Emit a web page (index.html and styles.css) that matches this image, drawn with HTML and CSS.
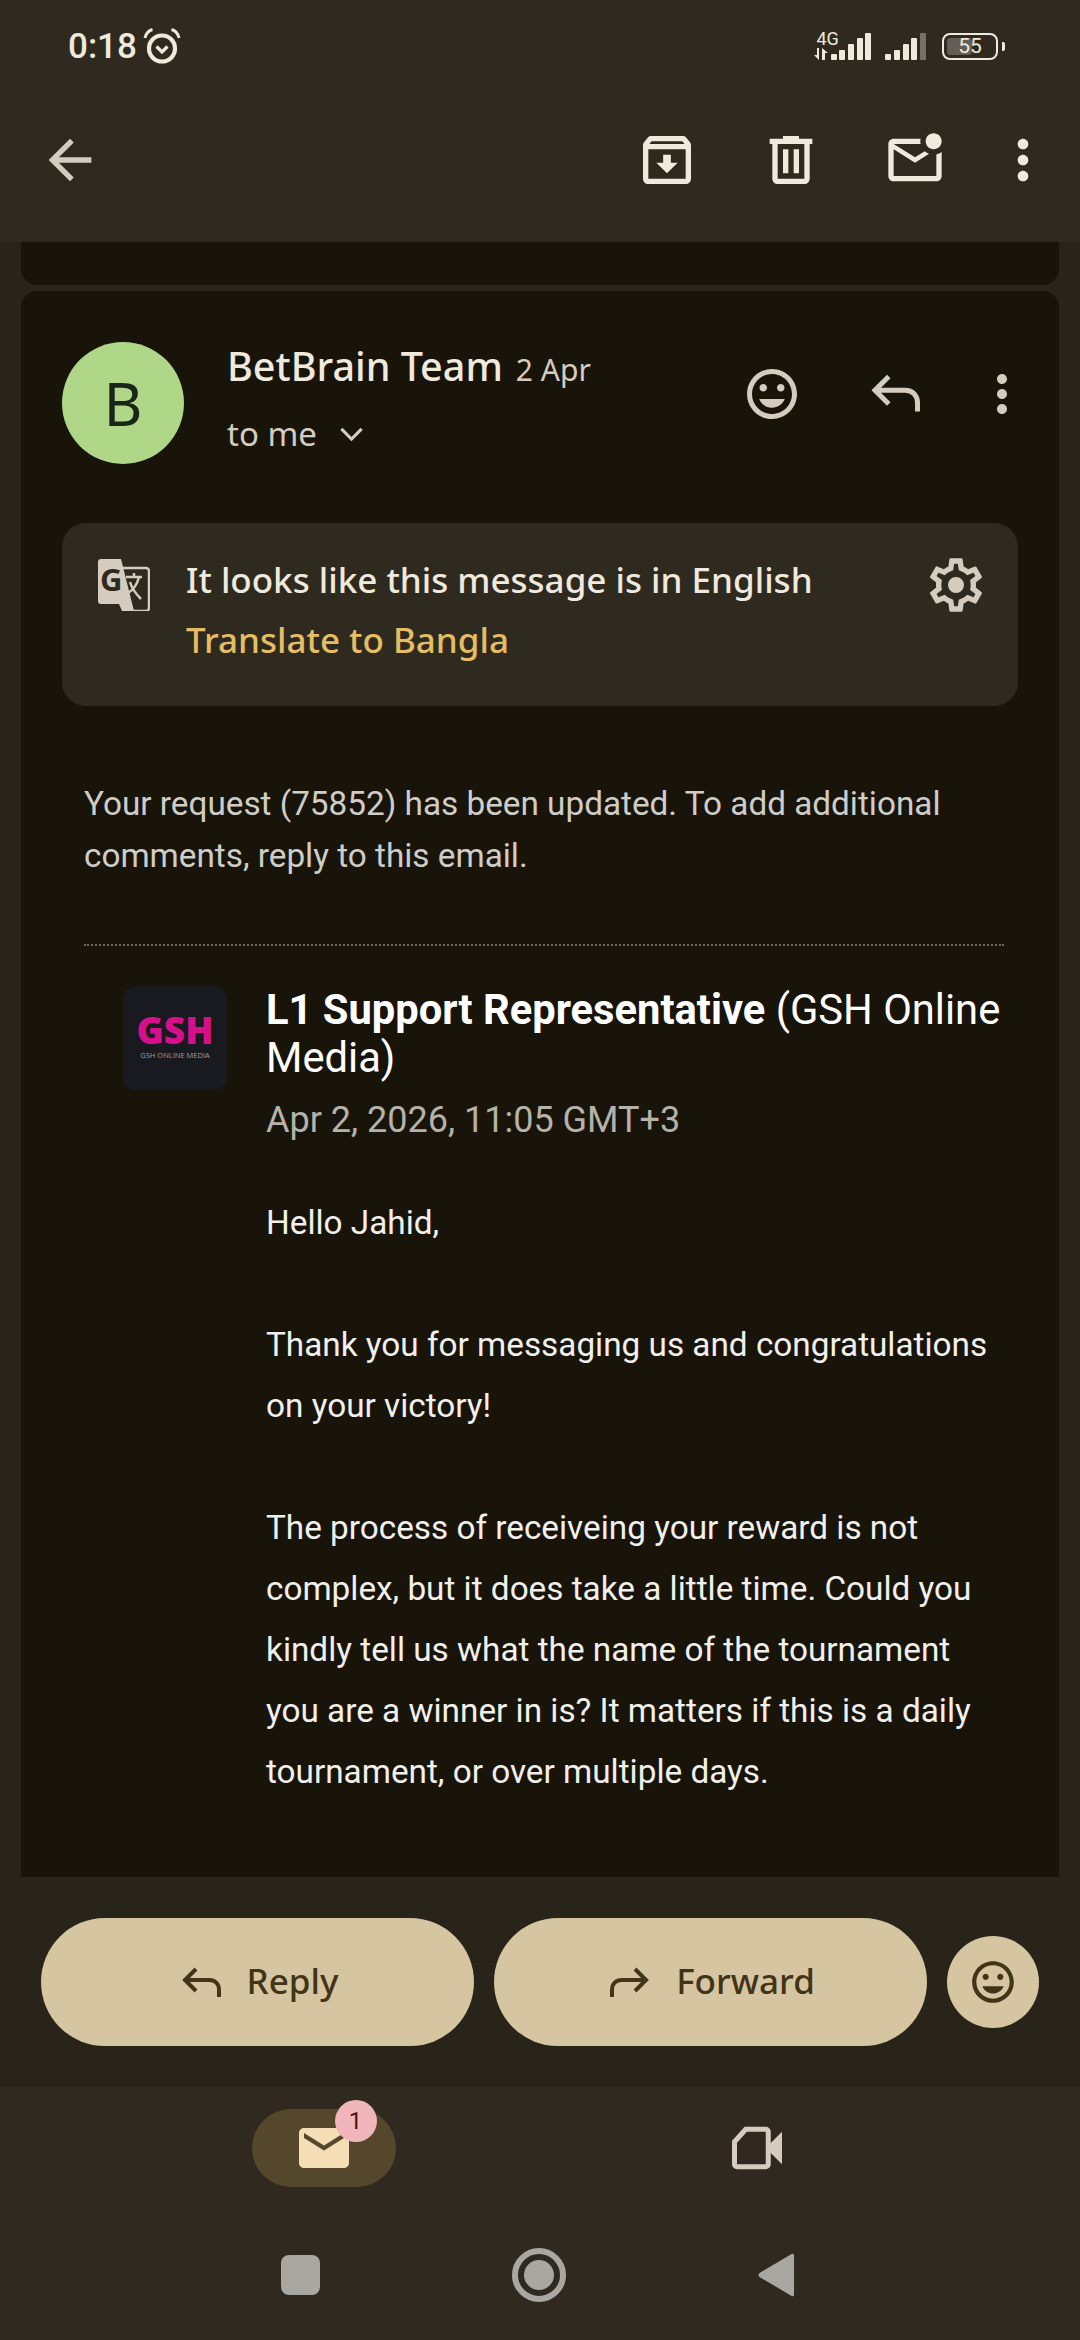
FILE: index.html
```html
<!DOCTYPE html>
<html lang="en">
<head>
<meta charset="utf-8">
<title>BetBrain Team</title>
<link rel="stylesheet" href="styles.css">
</head>
<body>
<div class="screen">
  <header class="top">
    <div class="status">
      <div class="status-left">
        <span class="clock">0:18</span>
        <svg class="alarm" viewBox="0 0 38 36"><circle cx="19" cy="20.500" r="13" fill="none" stroke="currentColor" stroke-width="4.200"/><path d="M13.500 18.500 19 24l5.500-5.500" fill="none" stroke="currentColor" stroke-width="3.200"/><path d="M2 10C3 5.500 5.500 2.500 9.500 1.500M36 10C35 5.500 32.500 2.500 28.500 1.500" fill="none" stroke="currentColor" stroke-width="3"/></svg>
      </div>
      <div class="status-right">
        <div class="net">
          <span class="net-label">4G</span>
          <svg class="net-arrows" viewBox="0 0 15 12"><path d="M5 0v12L0 7h3V0zM8 12V0l6 5h-3v7z" fill="currentColor"/></svg>
        </div>
        <div class="bars"><i class="b1"></i><i class="b2"></i><i class="b3"></i><i class="b4"></i><i class="b5"></i></div>
        <div class="bars bars-two"><i class="b1"></i><i class="b2"></i><i class="b3"></i><i class="b4"></i><i class="b5 dim"></i></div>
        <div class="battery"><div class="battery-body"><span class="battery-fill"></span><span class="battery-num">55</span></div><span class="battery-tip"></span></div>
      </div>
    </div>
    <div class="toolbar">
      <svg class="icon" viewBox="0 0 24 24"><path d="M20 11H7.830l5.590-5.590L12 4l-8 8 8 8 1.410-1.410L7.830 13H20z" fill="currentColor" opacity=".85"/></svg>
      <div class="toolbar-actions">
        <svg class="icon" viewBox="0 0 24 24"><path d="M20.540 5.230l-1.390-1.680C18.880 3.210 18.470 3 18 3H6c-.47 0-.88.21-1.160.55L3.460 5.230C3.170 5.570 3 6.020 3 6.500V19c0 1.100.9 2 2 2h14c1.100 0 2-.9 2-2V6.500c0-.48-.17-.93-.46-1.270zM6.240 5h11.520l.83 1H5.420zM5 19V8h14v11zm8.450-9h-2.900v3H8l4 4 4-4h-2.550z" fill="currentColor"/></svg>
        <svg class="icon" viewBox="0 0 24 24"><path d="M15 4V3H9v1H4v2h1v13c0 1.100.9 2 2 2h10c1.100 0 2-.9 2-2V6h1V4zm2 15H7V6h10zM9 8h2v9H9zm4 0h2v9h-2z" fill="currentColor"/></svg>
        <svg class="icon" viewBox="0 0 24 24"><path d="M22 8.980V18c0 1.100-.9 2-2 2H4c-1.100 0-2-.9-2-2V6c0-1.100.9-2 2-2h10.100c-.06.32-.1.66-.1 1s.04.68.1 1H4l8 5 3.670-2.290c.47.43 1.020.76 1.630.98L12 13 4 8v10h16V9.900c.74-.15 1.420-.48 2-.92zM16 5c0 1.660 1.340 3 3 3s3-1.340 3-3-1.340-3-3-3-3 1.340-3 3z" fill="currentColor"/></svg>
        <svg class="icon" viewBox="0 0 24 24"><path d="M12 8c1.100 0 2-.9 2-2s-.9-2-2-2-2 .9-2 2 .9 2 2 2zm0 2c-1.100 0-2 .9-2 2s.9 2 2 2 2-.9 2-2-.9-2-2-2zm0 6c-1.100 0-2 .9-2 2s.9 2 2 2 2-.9 2-2-.9-2-2-2z" fill="currentColor"/></svg>
      </div>
    </div>
  </header>

  <main class="thread">
    <div class="card-stub"></div>
    <article class="card">
      <div class="sender">
        <div class="avatar">B</div>
        <div class="sender-info">
          <div class="sender-line"><span class="sender-name">BetBrain Team</span><span class="sender-date">2 Apr</span></div>
          <div class="to-line"><span>to me</span>
            <svg class="chev" viewBox="0 0 24 24"><path d="M3 7l9 9 9-9" fill="none" stroke="currentColor" stroke-width="2.800"/></svg>
          </div>
        </div>
        <div class="sender-actions">
          <svg class="icon" viewBox="0 0 24 24"><path d="M11.990 2C6.470 2 2 6.480 2 12s4.470 10 9.990 10C17.520 22 22 17.520 22 12S17.520 2 11.990 2zM12 20c-4.420 0-8-3.580-8-8s3.580-8 8-8 8 3.580 8 8-3.580 8-8 8zm3.500-9c.83 0 1.500-.67 1.500-1.500S16.330 8 15.500 8 14 8.670 14 9.500s.67 1.500 1.500 1.500zm-7 0c.83 0 1.500-.67 1.500-1.500S9.330 8 8.500 8 7 8.670 7 9.500 7.670 11 8.500 11zm3.500 6.500c2.330 0 4.310-1.460 5.110-3.500H6.890c.8 2.040 2.780 3.500 5.110 3.500z" fill="currentColor"/></svg>
          <svg class="icon" viewBox="0 0 24 24"><path d="M21 19v-3.500c0-3-2-5-5-5H4M9.500 5 4 10.500 9.500 16" fill="none" stroke="currentColor" stroke-width="2"/></svg>
          <svg class="icon" viewBox="0 0 24 24"><path d="M12 8c1.100 0 2-.9 2-2s-.9-2-2-2-2 .9-2 2 .9 2 2 2zm0 2c-1.100 0-2 .9-2 2s.9 2 2 2 2-.9 2-2-.9-2-2-2zm0 6c-1.100 0-2 .9-2 2s.9 2 2 2 2-.9 2-2-.9-2-2-2z" fill="currentColor"/></svg>
        </div>
      </div>

      <div class="translate">
        <svg class="translate-icon" viewBox="0 0 52 52">
          <path d="M24 9h24a3 3 0 0 1 3 3v37a3 3 0 0 1-3 3H28" fill="none" stroke="#d4cdbf" stroke-width="2.500"/>
          <path d="M3 0h20l13 52H24l-3-7H3a3 3 0 0 1-3-3V3a3 3 0 0 1 3-3z" fill="#d4cdbf"/>
          <text class="translate-g" x="2" y="32">G</text>
          <path d="M28 18h16M36 14v4M41 18c-2 8-6 13-11 16M32 23c2 7 6 12 11 17" fill="none" stroke="#d4cdbf" stroke-width="2.500"/>
        </svg>
        <div class="translate-text">
          <div class="translate-msg">It looks like this message is in English</div>
          <div class="translate-link">Translate to Bangla</div>
        </div>
        <svg class="gear" viewBox="0 0 24 24"><path d="M19.430 12.980c.04-.32.07-.64.07-.98s-.03-.66-.07-.98l2.110-1.650c.19-.15.24-.42.12-.64l-2-3.460c-.12-.22-.39-.3-.61-.22l-2.490 1c-.52-.4-1.080-.73-1.690-.98l-.38-2.650C14.460 2.180 14.250 2 14 2h-4c-.25 0-.46.18-.49.42l-.38 2.650c-.61.25-1.170.59-1.690.98l-2.490-1c-.23-.09-.49 0-.61.22l-2 3.460c-.13.22-.07.49.12.64l2.110 1.650c-.04.32-.07.65-.07.98s.03.66.07.98l-2.110 1.650c-.19.15-.24.42-.12.64l2 3.460c.12.22.39.3.61.22l2.490-1c.52.4 1.080.73 1.690.98l.38 2.650c.03.24.24.42.49.42h4c.25 0 .46-.18.49-.42l.38-2.650c.61-.25 1.170-.59 1.690-.98l2.490 1c.23.09.49 0 .61-.22l2-3.460c.12-.22.07-.49-.12-.64zM17.450 11.270c.04.31.05.52.05.73s-.02.43-.05.73l-.14 1.130.89.7 1.080.84-.7 1.210-1.270-.51-1.040-.42-.9.68c-.43.32-.84.56-1.250.73l-1.060.43-.16 1.130-.2 1.350h-1.400l-.19-1.350-.16-1.130-1.060-.43c-.43-.18-.83-.41-1.230-.71l-.91-.7-1.060.43-1.270.51-.7-1.210 1.080-.84.89-.7-.14-1.130c-.03-.31-.05-.54-.05-.74s.02-.43.05-.73l.14-1.130-.89-.7-1.080-.84.7-1.210 1.270.51 1.040.42.9-.68c.43-.32.84-.56 1.250-.73l1.060-.43.16-1.130.2-1.350h1.390l.19 1.350.16 1.130 1.060.43c.43.18.83.41 1.230.71l.91.7 1.060-.43 1.270-.51.7 1.210-1.070.85-.89.7zM12 9a3 3 0 1 0 0 6 3 3 0 0 0 0-6z" fill="#d4cdbf"/></svg>
      </div>

      <p class="intro">Your request (75852) has been updated. To add additional comments, reply to this email.</p>

      <div class="reply-block">
        <div class="logo"><span class="logo-mark">GSH</span><span class="logo-sub">GSH ONLINE MEDIA</span></div>
        <div class="reply-content">
          <h2 class="author"><strong>L1 Support Representative</strong> (GSH Online Media)</h2>
          <div class="stamp">Apr 2, 2026, 11:05 GMT+3</div>
          <div class="body-text">
            <p>Hello Jahid,</p>
            <p>Thank you for messaging us and congratulations on your victory!</p>
            <p>The process of receiveing your reward is not complex, but it does take a little time. Could you kindly tell us what the name of the tournament you are a winner in is? It matters if this is a daily tournament, or over multiple days.</p>
          </div>
        </div>
      </div>
    </article>
  </main>

  <div class="actions">
    <button class="pill">
      <svg class="pill-icon" viewBox="0 0 24 24"><path d="M21 19.500V16c0-3-2-5-5-5H4M9.500 5.500 4 11l5.500 5.500" fill="none" stroke="currentColor" stroke-width="2"/></svg>
      <span class="pill-label">Reply</span>
    </button>
    <button class="pill">
      <svg class="pill-icon" viewBox="0 0 24 24"><path d="M3 19.500V16c0-3 2-5 5-5h12M14.500 5.500 20 11l-5.500 5.500" fill="none" stroke="currentColor" stroke-width="2"/></svg>
      <span class="pill-label">Forward</span>
    </button>
    <button class="round">
      <svg class="round-icon" viewBox="0 0 24 24"><path d="M11.990 2C6.470 2 2 6.480 2 12s4.470 10 9.990 10C17.520 22 22 17.520 22 12S17.520 2 11.990 2zM12 20c-4.420 0-8-3.580-8-8s3.580-8 8-8 8 3.580 8 8-3.580 8-8 8zm3.500-9c.83 0 1.500-.67 1.500-1.500S16.330 8 15.500 8 14 8.670 14 9.500s.67 1.500 1.500 1.500zm-7 0c.83 0 1.500-.67 1.500-1.500S9.330 8 8.500 8 7 8.670 7 9.500 7.670 11 8.500 11zm3.500 6.500c2.330 0 4.310-1.460 5.110-3.500H6.890c.8 2.040 2.780 3.500 5.110 3.500z" fill="currentColor"/></svg>
    </button>
  </div>

  <footer class="bottom">
    <nav class="tabs">
      <div class="tab tab-active">
        <svg class="tab-icon" viewBox="0 0 24 24"><path d="M20 4H4c-1.100 0-1.990.9-1.990 2L2 18c0 1.100.9 2 2 2h16c1.100 0 2-.9 2-2V6c0-1.100-.9-2-2-2zm0 4l-8 5-8-5V6l8 5 8-5z" fill="#f5deb5"/></svg>
        <span class="badge">1</span>
      </div>
      <div class="tab">
        <svg class="tab-icon" viewBox="0 0 24 24"><path d="M7.500 4.500h8a1 1 0 0 1 1 1v13a1 1 0 0 1-1 1H4a1 1 0 0 1-1-1V9.500z" fill="none" stroke="#d4cdbf" stroke-width="2"/><path d="M17 10.500l5-5v13l-5-5z" fill="#d4cdbf"/></svg>
      </div>
    </nav>
    <div class="sysnav">
      <span class="sys-square"></span>
      <span class="sys-circle"><i></i></span>
      <svg class="sys-back" viewBox="0 0 38 46"><path d="M37 2.500V43.500a1.500 1.500 0 0 1-2.500 1L1.500 25a3 3 0 0 1 0-4L34.500 1.500a1.500 1.500 0 0 1 2.500 1z" fill="#a9a7a2"/></svg>
    </div>
  </footer>
</div>
</body>
</html>
```
FILE: styles.css
```css
* { box-sizing: border-box; }
html, body { margin: 0; padding: 0; background: #28241a; }
.screen {
  width: 1080px; height: 2340px; display: flex; flex-direction: column;
  overflow: hidden; background: #28241a; color: #efe9de;
  font-family: Roboto, sans-serif;
}
.icon { width: 60px; height: 60px; flex: none; display: block; }

.top { height: 242px; flex: none; background: #2f291f; color: #efe9de; }
.status { height: 90px; padding: 2px 0 0 68px; display: flex; align-items: center; justify-content: space-between; }
.status-left { display: flex; align-items: center; gap: 6px; }
.clock { font-size: 35px; font-weight: 500; line-height: 1; }
.alarm { width: 38px; height: 36px; }
.status-right { display: flex; align-items: flex-end; height: 29px; padding-right: 75px; margin-top: -1px; }
.net { display: flex; flex-direction: column; align-items: flex-start; justify-content: flex-end; width: 17px; height: 29px; }
.net-label { font-size: 18px; line-height: 16px; margin-left: 3px; white-space: nowrap; }
.net-arrows { width: 15px; height: 12px; margin-top: 1px; }
.bars { display: flex; align-items: flex-end; gap: 2.700px; height: 27px; }
.bars i { display: block; width: 6px; background: #efe9de; border-radius: 1px; }
.bars .b1 { height: 6px; } .bars .b2 { height: 10px; } .bars .b3 { height: 16px; } .bars .b4 { height: 22px; } .bars .b5 { height: 27px; }
.bars .dim { background: #75716a; }
.bars-two { margin-left: 14px; }
.battery { display: flex; align-items: center; margin-left: 16px; gap: 4px; }
.battery-body {
  position: relative; width: 56px; height: 27px; border: 2.500px solid #efe9de; border-radius: 8px;
  display: flex; align-items: center; justify-content: center; overflow: hidden;
}
.battery-fill { position: absolute; left: 3px; top: 3px; bottom: 3px; width: 25px; background: #625e56; border-radius: 3px; }
.battery-num { position: relative; font-size: 21px; line-height: 1; color: #efe9de; }
.battery-tip { width: 3px; height: 9px; background: #efe9de; border-radius: 0 2px 2px 0; }

.toolbar { display: flex; align-items: center; justify-content: space-between; padding: 38px 25px 0 38px; }
.toolbar .icon { width: 64px; height: 64px; }
.toolbar-actions { display: flex; gap: 60px; }
.toolbar-actions .icon:last-child { margin-left: -16px; }

.thread { flex: 1; min-height: 0; overflow: hidden; padding: 0 21px; display: flex; flex-direction: column; gap: 6px; }
.card-stub { height: 43px; flex: none; background: #18140a; border-radius: 0 0 16px 16px; }
.card { flex: 1; background: #18140a; border-radius: 16px 16px 0 0; padding: 51px 41px 0; }

.sender { display: flex; align-items: flex-start; height: 122px; }
.avatar {
  width: 122px; height: 122px; border-radius: 50%; flex: none; background: #afd787; color: #17251a;
  display: flex; align-items: center; justify-content: center; font-family: "Noto Sans", sans-serif; font-size: 60px;
}
.sender-info { margin-left: 43px; flex: 1; }
.sender-line { display: flex; align-items: baseline; gap: 13px; height: 48px; }
.sender-name { font-family: "Noto Sans", sans-serif; font-size: 39.500px; font-weight: 500; line-height: 48px; color: #efe9de; }
.sender-date { font-family: "Noto Sans", sans-serif; font-size: 30px; color: #d4cdbf; }
.to-line { display: flex; align-items: center; gap: 21px; margin-top: 22px; font-family: "Noto Sans", sans-serif; font-size: 33px; line-height: 44px; color: #d4cdbf; }
.chev { width: 27px; height: 27px; }
.sender-actions { display: flex; gap: 63px; color: #d4cdbf; margin-top: 22px; margin-right: -14px; }
.sender-actions .icon:last-child { margin-left: -16px; }

.translate {
  margin-top: 59px; height: 183px; border-radius: 24px; background: #2f2a20; padding: 30px 30px 0 36px;
  display: flex; align-items: flex-start;
}
.translate-icon { width: 52px; height: 52px; flex: none; margin-top: 6px; }
.translate-g { font-family: "Open Sans", sans-serif; font-size: 31px; font-weight: 700; fill: #2f2a20; }
.translate-text { flex: 1; margin: -3px 0 0 36px; font-family: "Noto Sans", sans-serif; font-size: 35px; font-weight: 500; line-height: 60px; }
.translate-msg { color: #efe9de; }
.translate-link { color: #e5bd63; }
.gear { width: 64px; height: 64px; flex: none; }

.intro { margin: 72px 22px 0; font-size: 33.300px; line-height: 52px; color: #cfcdc8; }

.reply-block {
  margin: 62px 14px 0 22px; padding: 40px 0 0 39px; border-top: 2px dotted #6c695f;
  display: flex; align-items: flex-start;
}
.logo {
  width: 104px; height: 104px; flex: none; border-radius: 12px; background: #181a20;
  display: flex; flex-direction: column; align-items: center; justify-content: center; gap: 6px; padding-bottom: 3px;
}
.logo-mark { font-family: "Open Sans", sans-serif; font-weight: 800; font-size: 37px; line-height: 30px; color: #d5108a; }
.logo-sub { font-family: "Open Sans", sans-serif; font-size: 7.500px; line-height: 8px; color: #9c9ca0; white-space: nowrap; }
.reply-content { margin-left: 39px; flex: 1; min-width: 0; }
.author { margin: 0; font-size: 41.700px; line-height: 48px; font-weight: 400; color: #fff; }
.author strong { font-weight: 700; }
.stamp { margin-top: 16px; font-size: 36px; line-height: 44px; color: #b5b2aa; }
.body-text { margin-top: 50px; font-size: 33.300px; line-height: 61px; color: #f2f0ec; }
.body-text p { margin: 0 0 61px; }

.actions { height: 210px; flex: none; padding: 41px 0 0 41px; display: flex; align-items: flex-start; gap: 20px; background: #28241a; }
.pill {
  width: 433px; height: 128px; flex: none; border: 0; border-radius: 64px; background: #d5c5a0; color: #423418; padding: 0;
  display: flex; align-items: center; justify-content: center; gap: 22px;
  font-family: "Noto Sans", sans-serif; font-size: 35px; font-weight: 500;
}
.pill-label { margin-top: -3px; }
.pill-icon { width: 48px; height: 48px; flex: none; }
.round {
  width: 92px; height: 92px; flex: none; margin: 18px 0 0 0; border: 0; border-radius: 50%; background: #d5c5a0; color: #423418; padding: 0;
  display: flex; align-items: center; justify-content: center;
}
.round-icon { width: 50px; height: 50px; }

.bottom { height: 253px; flex: none; background: #2f291f; }
.tabs { display: flex; justify-content: center; gap: 289px; padding: 22px 0 0 0; }
.tab { position: relative; width: 144px; height: 78px; border-radius: 39px; display: flex; align-items: center; justify-content: center; }
.tab-active { background: #54472b; }
.tab-icon { width: 60px; height: 60px; }
.badge {
  position: absolute; left: 83px; top: -9px; width: 42px; height: 42px; border-radius: 50%; background: #f0b6bb; color: #4e1319;
  font-size: 24px; line-height: 42px; text-align: center;
}
.sysnav { display: flex; align-items: center; margin-top: 58px; height: 60px; padding-left: 281px; }
.sys-square { width: 39px; height: 40px; border-radius: 8px; background: #a9a7a2; margin-right: 192px; }
.sys-circle { width: 54px; height: 54px; border: 6px solid #a9a7a2; border-radius: 50%; display: flex; align-items: center; justify-content: center; margin-right: 192px; }
.sys-circle i { display: block; width: 30px; height: 30px; border-radius: 50%; background: #a9a7a2; }
.sys-back { width: 37px; height: 46px; }
```
